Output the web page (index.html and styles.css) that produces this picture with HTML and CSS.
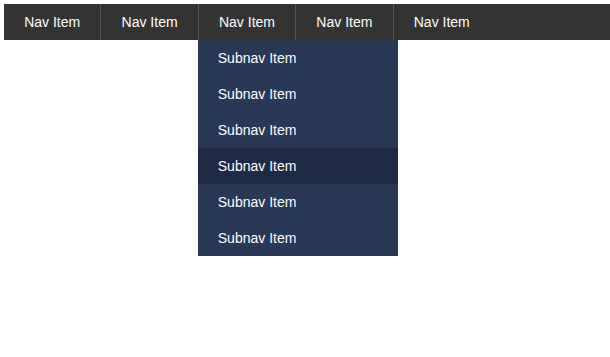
FILE: index.html
```html
<!DOCTYPE html>
<html lang="en">

<head>
  <meta charset="UTF-8">
  <meta name="viewport" content="width=device-width, initial-scale=1.0">
  <title>Dropdown Nav</title>
  <link rel="stylesheet" href="styles.css">
</head>

<body>
  <nav class="nav">
    <div class="nav-item"><a class="nav-link" href="#">Nav Item</a></div>
    <div class="nav-item"><a class="nav-link" href="#">Nav Item</a></div>
    <div class="nav-item">
      <a class="nav-link" href="#">Nav Item</a>
      <div class="dropdown">
        <a class="dropdown-link" href="#">Subnav Item</a>
        <a class="dropdown-link" href="#">Subnav Item</a>
        <a class="dropdown-link" href="#">Subnav Item</a>
        <a class="dropdown-link active" href="#">Subnav Item</a>
        <a class="dropdown-link" href="#">Subnav Item</a>
        <a class="dropdown-link" href="#">Subnav Item</a>
      </div>
    </div>
    <div class="nav-item"><a class="nav-link" href="#">Nav Item</a></div>
    <div class="nav-item"><a class="nav-link" href="#">Nav Item</a></div>
  </nav>
</body>

</html>
```

FILE: styles.css
```css
/* Base styles */
html {
  height: 100%;
}

body {
  font-family: "Liberation Sans", Arial, sans-serif;
  margin: 4px 0 0 4px;
  min-height: calc(100% - 4px);
  font-size: 14px;
}

a {
  color: #fff;
  text-decoration: none;
}

.nav {
  display: flex;
  background: #333;
  height: 36px;
}

.nav-item {
  position: relative;
}

.nav-item + .nav-item {
  border-left: 1px solid #555;
}

.nav-link {
  display: block;
  line-height: 36px;
  padding: 0 20.2px;
}

/* Dropdown, shown open */
.dropdown {
  position: absolute;
  top: 36px;
  left: -1px;
  z-index: 10;
  width: 200px;
  background: #283855;
}

.dropdown-link {
  display: block;
  height: 36px;
  line-height: 36px;
  padding: 0 20px;
}

.dropdown-link.active,
.dropdown-link:hover {
  background: #1f2b44;
}
```
